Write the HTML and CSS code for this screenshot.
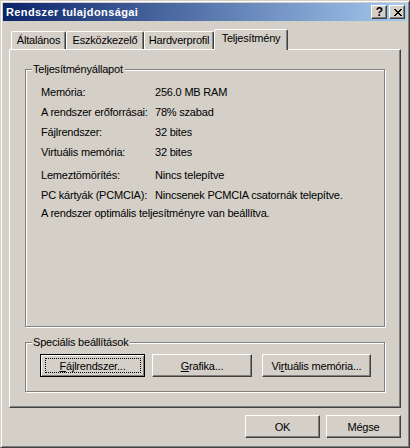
FILE: index.html
```html
<!DOCTYPE html>
<html lang="hu">
<head>
<meta charset="utf-8">
<title>Rendszer tulajdonságai</title>
<link rel="stylesheet" href="styles.css">
</head>
<body>
<div class="win">
  <div class="title">
    <span class="title-text">Rendszer tulajdonságai</span>
    <span class="cap-btn help">?</span>
    <span class="cap-btn close">
      <svg width="8" height="7" viewBox="0 0 8 7" shape-rendering="crispEdges">
        <path d="M0 0h2v1h-2zM6 0h2v1h-2zM1 1h2v1h-2zM5 1h2v1h-2zM2 2h4v1h-4zM3 3h2v1h-2zM2 4h4v1h-4zM1 5h2v1h-2zM5 5h2v1h-2zM0 6h2v1h-2zM6 6h2v1h-2z" fill="#000"/>
      </svg>
    </span>
  </div>

  <div class="tabs">
    <div class="tab t1">Általános</div>
    <div class="tab t2">Eszközkezelő</div>
    <div class="tab t3">Hardverprofil</div>
    <div class="tab t4 active">Teljesítmény</div>
  </div>

  <div class="panel">
    <div class="group g1">
      <span class="legend">Teljesítményállapot</span>
      <div class="row"><span class="lbl">Memória:</span><span>256.0 MB RAM</span></div>
      <div class="row"><span class="lbl">A rendszer erőforrásai:</span><span>78% szabad</span></div>
      <div class="row"><span class="lbl">Fájlrendszer:</span><span>32 bites</span></div>
      <div class="row"><span class="lbl">Virtuális memória:</span><span>32 bites</span></div>
      <div class="row gap"><span class="lbl">Lemeztömörítés:</span><span>Nincs telepítve</span></div>
      <div class="row"><span class="lbl">PC kártyák (PCMCIA):</span><span>Nincsenek PCMCIA csatornák telepítve.</span></div>
      <div class="row last">A rendszer optimális teljesítményre van beállítva.</div>
    </div>

    <div class="group g2">
      <span class="legend">Speciális beállítások</span>
      <div class="btn-row">
        <div class="btn default b-fs"><span class="focus"></span><u>F</u>ájlrendszer...</div>
        <div class="btn b-gr"><u>G</u>rafika...</div>
        <div class="btn b-vm">Vi<u>r</u>tuális memória...</div>
      </div>
    </div>
  </div>

  <div class="footer">
    <div class="btn b-dlg">OK</div>
    <div class="btn b-dlg">Mégse</div>
  </div>
</div>
</body>
</html>
```

FILE: styles.css
```css
html, body {
  margin: 0;
  padding: 0;
  background: #D4D0C8;
}

body {
  font-family: "Liberation Sans", Arial, sans-serif;
  font-size: 11px;
  letter-spacing: -0.2px;
  color: #000;
}

.win {
  width: 410px;
  height: 448px;
  box-sizing: border-box;
  border: 1px solid;
  border-color: #D4D0C8 #404040 #404040 #D4D0C8;
  box-shadow: inset 1px 1px #fff, inset -1px -1px #808080;
  padding: 2px;
  background: #D4D0C8;
  display: flex;
  flex-direction: column;
}

.title {
  height: 18px;
  flex: none;
  background: linear-gradient(to right, #0A246A, #A6CAF0);
  display: flex;
  align-items: center;
  padding-left: 3px;
  gap: 2px;
  padding-right: 2px;
}

.title-text {
  color: #fff;
  font-weight: bold;
  font-size: 11px;
  margin-right: auto;
  letter-spacing: 0.4px;
}

.cap-btn {
  width: 16px;
  height: 14px;
  box-sizing: border-box;
  background: #D4D0C8;
  border: 1px solid;
  border-color: #fff #404040 #404040 #fff;
  box-shadow: inset -1px -1px #808080;
  display: flex;
  align-items: center;
  justify-content: center;
  letter-spacing: 0;
}

.help {
  font-weight: bold;
  font-size: 12px;
  line-height: 12px;
  padding-left: 1px;
}

.close svg {
  display: block;
  margin-left: 1px;
}

.tabs {
  margin: 8px 6px 0;
  padding-left: 2px;
  height: 20px;
  display: flex;
  align-items: flex-end;
  flex: none;
}

.tab {
  height: 18px;
  box-sizing: border-box;
  border: 1px solid;
  border-bottom: none;
  border-color: #fff #404040 transparent #fff;
  box-shadow: inset -1px 0 #808080;
  border-radius: 2px 2px 0 0;
  text-align: center;
  line-height: 17px;
}

.t1 { width: 55px; }
.t2 { width: 78px; }
.t3 { width: 70px; }
.t4 { width: 74px; }

.tab.active {
  height: 21px;
  margin-bottom: -1px;
  position: relative;
  z-index: 1;
  background: #D4D0C8;
  line-height: 17px;
}

.panel {
  margin: 0 6px;
  height: 359px;
  flex: none;
  box-sizing: border-box;
  border: 1px solid;
  border-color: #fff #404040 #404040 #fff;
  box-shadow: inset -1px -1px #808080;
  padding: 19px 0 0 15px;
}

.group {
  position: relative;
  width: 360px;
  box-sizing: border-box;
  border: 1px solid #808080;
  box-shadow: inset 1px 1px #fff, 1px 1px #fff;
}

.legend {
  position: absolute;
  top: -7px;
  left: 6px;
  padding: 0 2px 0 1px;
  background: #D4D0C8;
  line-height: 13px;
}

.g1 {
  height: 258px;
  padding: 12px 0 0 15px;
}

.row {
  display: flex;
  height: 20px;
  line-height: 20px;
  white-space: nowrap;
}

.row.gap { margin-top: 3px; }

.row.last {
  height: 16px;
  line-height: 16px;
}

.lbl {
  width: 114px;
  flex: none;
}

.g2 {
  height: 50px;
  margin-top: 15px;
  padding: 11px 0 0 14px;
}

.btn-row {
  display: flex;
}

.btn {
  position: relative;
  height: 23px;
  box-sizing: border-box;
  border: 1px solid;
  border-color: #fff #404040 #404040 #fff;
  box-shadow: inset -1px -1px #808080;
  display: flex;
  align-items: center;
  justify-content: center;
  white-space: nowrap;
}

.btn.default {
  border-color: #000;
  box-shadow: inset 1px 1px #fff, inset -1px -1px #808080;
}

.focus {
  position: absolute;
  left: 4px;
  top: 3px;
  right: 3px;
  bottom: 3px;
  border: 1px dotted #000;
}

.b-fs { width: 105px; }
.b-gr { width: 100px; margin-left: 7px; }
.b-vm { width: 109px; margin-left: 10px; }

.footer {
  display: flex;
  justify-content: flex-end;
  gap: 6px;
  padding-right: 6px;
  margin-top: 7px;
}

.b-dlg { width: 75px; }
```
